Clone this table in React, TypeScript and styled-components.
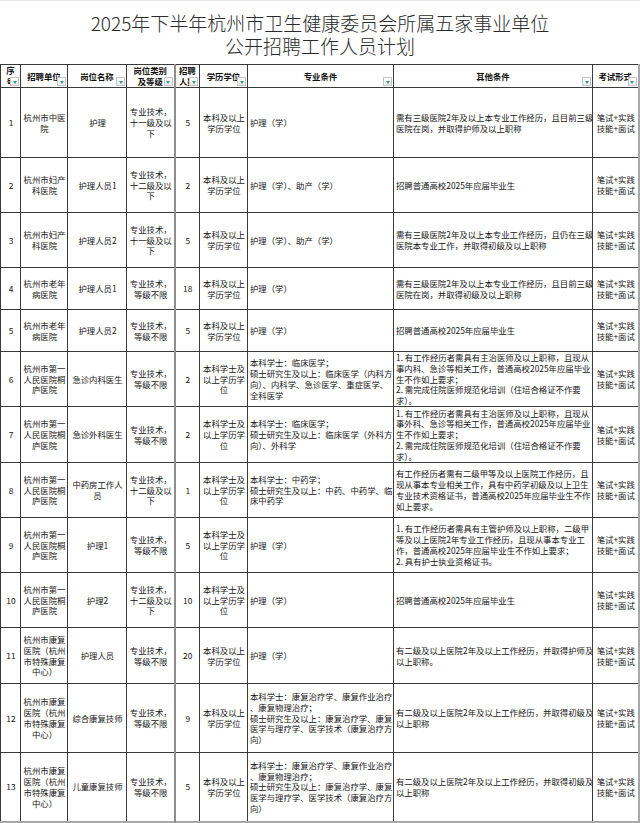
import React from "react";
import styled, { createGlobalStyle } from "styled-components";

const GlobalStyle = createGlobalStyle`
  html, body { margin: 0; padding: 0; background: #fff; }
  body { font-family: "Noto Sans CJK SC", "Noto Sans", sans-serif; color: #111; }
`;

const Page = styled.div`
  width: 640px;
  border-top: 1px solid #e6e6e6;
  box-sizing: border-box;
`;

const TitleBlock = styled.header`
  height: 63px;
  padding-top: 10px;
  box-sizing: border-box;
  text-align: center;
  font-size: 19px;
  line-height: 23px;
  font-weight: 300;
  color: #2a2a2a;
`;

const TitleLine = styled.div`
  display: block;
`;

const Table = styled.table`
  border-collapse: collapse;
  table-layout: fixed;
  width: 639px;
  border-right: 2px solid #a8a8a8;
  border-bottom: 2px solid #a8a8a8;
`;

const Col = styled.col<{ $w: number }>`
  width: ${(p) => p.$w}px;
`;

const Row = styled.tr<{ $h: number }>`
  height: ${(p) => p.$h}px;
`;

const Cell = styled.td<{ $align?: "left" | "center"; $split?: boolean }>`
  border: 1px solid #3a3a3a;
  ${(p) => (p.$split ? "border-left: 2px solid #8e8e8e;" : "")}
  padding: 0 1px 0 2px;
  font-size: 8.4px;
  line-height: 10.8px;
  text-align: ${(p) => p.$align ?? "center"};
  vertical-align: middle;
  white-space: nowrap;
  overflow: hidden;
  color: #151515;
`;

const HeadCell = styled.th<{ $split?: boolean }>`
  position: relative;
  border: 1px solid #3a3a3a;
  ${(p) => (p.$split ? "border-left: 2px solid #8e8e8e;" : "")}
  padding: 0 1px;
  font-size: 8.4px;
  line-height: 10.8px;
  font-weight: 700;
  text-align: center;
  vertical-align: middle;
  white-space: nowrap;
  overflow: hidden;
  color: #111;
`;

const Line = styled.span`
  display: block;
`;

const Filter = styled.span`
  position: absolute;
  right: 1px;
  bottom: 1px;
  width: 9px;
  height: 9px;
  box-sizing: border-box;
  border: 1px solid #c6c6c6;
  background: linear-gradient(#ffffff, #ececec);
  &::after {
    content: "";
    position: absolute;
    left: 1.5px;
    top: 3px;
    border-left: 2.5px solid transparent;
    border-right: 2.5px solid transparent;
    border-top: 3px solid #2c9d84;
  }
`;

const Lines = ({ text }: { text: string }) => (
  <>
    {text.split("\n").map((l, i) => (
      <Line key={i}>{l}</Line>
    ))}
  </>
);

const widths = [20, 47, 59, 48, 25, 48, 146, 199, 46];

const headers = [
  "序\n号",
  "招聘单位",
  "岗位名称",
  "岗位类别\n及等级",
  "招聘\n人数",
  "学历学位",
  "专业条件",
  "其他条件",
  "考试形式",
];

type RowData = { h: number; cells: string[] };

const exam = "笔试+实践\n技能+面试";
const tl = "杭州市第一\n人民医院桐\n庐医院";
const kf = "杭州市康复\n医院（杭州\n市特殊康复\n中心）";
const kfMajor =
  "本科学士：康复治疗学、康复作业治疗\n、康复物理治疗；\n硕士研究生及以上：康复治疗学、康复\n医学与理疗学、医学技术（康复治疗方\n向）";

const rows: RowData[] = [
  {
    h: 70,
    cells: [
      "1",
      "杭州市中医\n院",
      "护理",
      "专业技术，\n十一级及以\n下",
      "5",
      "本科及以上\n学历学位",
      "护理（学）",
      "需有三级医院2年及以上本专业工作经历，且目前三级\n医院在岗，并取得护师及以上职称",
      exam,
    ],
  },
  {
    h: 55,
    cells: [
      "2",
      "杭州市妇产\n科医院",
      "护理人员1",
      "专业技术，\n十二级及以\n下",
      "2",
      "本科及以上\n学历学位",
      "护理（学）、助产（学）",
      "招聘普通高校2025年应届毕业生",
      exam,
    ],
  },
  {
    h: 55,
    cells: [
      "3",
      "杭州市妇产\n科医院",
      "护理人员2",
      "专业技术，\n十一级及以\n下",
      "5",
      "本科及以上\n学历学位",
      "护理（学）、助产（学）",
      "需有三级医院2年及以上本专业工作经历，且仍在三级\n医院本专业工作，并取得初级及以上职称",
      exam,
    ],
  },
  {
    h: 42,
    cells: [
      "4",
      "杭州市老年\n病医院",
      "护理人员1",
      "专业技术，\n等级不限",
      "18",
      "本科及以上\n学历学位",
      "护理（学）",
      "需有三级医院2年及以上本专业工作经历，且目前三级\n医院在岗，并取得初级及以上职称",
      exam,
    ],
  },
  {
    h: 42,
    cells: [
      "5",
      "杭州市老年\n病医院",
      "护理人员2",
      "专业技术，\n等级不限",
      "5",
      "本科及以上\n学历学位",
      "护理（学）",
      "招聘普通高校2025年应届毕业生",
      exam,
    ],
  },
  {
    h: 55,
    cells: [
      "6",
      tl,
      "急诊内科医生",
      "专业技术，\n等级不限",
      "2",
      "本科学士及\n以上学历学\n位",
      "本科学士：临床医学；\n硕士研究生及以上：临床医学（内科方\n向）、内科学、急诊医学、重症医学、\n全科医学",
      "1. 有工作经历者需具有主治医师及以上职称，且现从\n事内科、急诊等相关工作，普通高校2025年应届毕业\n生不作如上要求；\n2. 需完成住院医师规范化培训（住培合格证不作要\n求）。",
      exam,
    ],
  },
  {
    h: 56,
    cells: [
      "7",
      tl,
      "急诊外科医生",
      "专业技术，\n等级不限",
      "2",
      "本科学士及\n以上学历学\n位",
      "本科学士：临床医学；\n硕士研究生及以上：临床医学（外科方\n向）、外科学",
      "1. 有工作经历者需具有主治医师及以上职称，且现从\n事外科、急诊等相关工作，普通高校2025年应届毕业\n生不作如上要求；\n2. 需完成住院医师规范化培训（住培合格证不作要\n求）。",
      exam,
    ],
  },
  {
    h: 55,
    cells: [
      "8",
      tl,
      "中药房工作人\n员",
      "专业技术，\n十二级及以\n下",
      "1",
      "本科学士及\n以上学历学\n位",
      "本科学士：中药学；\n硕士研究生及以上：中药、中药学、临\n床中药学",
      "有工作经历者需有二级甲等及以上医院工作经历，且\n现从事本专业相关工作，具有中药学初级及以上卫生\n专业技术资格证书，普通高校2025年应届毕业生不作\n如上要求。",
      exam,
    ],
  },
  {
    h: 55,
    cells: [
      "9",
      tl,
      "护理1",
      "专业技术，\n等级不限",
      "5",
      "本科学士及\n以上学历学\n位",
      "护理（学）",
      "1. 有工作经历者需具有主管护师及以上职称，二级甲\n等及以上医院2年专业工作经历，且现从事本专业工\n作，普通高校2025年应届毕业生不作如上要求；\n2. 具有护士执业资格证书。",
      exam,
    ],
  },
  {
    h: 55,
    cells: [
      "10",
      tl,
      "护理2",
      "专业技术，\n十二级及以\n下",
      "10",
      "本科学士及\n以上学历学\n位",
      "护理（学）",
      "招聘普通高校2025年应届毕业生",
      exam,
    ],
  },
  {
    h: 56,
    cells: [
      "11",
      kf,
      "护理人员",
      "专业技术，\n等级不限",
      "20",
      "本科及以上\n学历学位",
      "护理（学）",
      "有二级及以上医院2年及以上工作经历，并取得护师及\n以上职称。",
      exam,
    ],
  },
  {
    h: 69,
    cells: [
      "12",
      kf,
      "综合康复技师",
      "专业技术，\n等级不限",
      "9",
      "本科及以上\n学历学位",
      kfMajor,
      "有二级及以上医院2年及以上工作经历，并取得初级及\n以上职称",
      exam,
    ],
  },
  {
    h: 69,
    cells: [
      "13",
      kf,
      "儿童康复技师",
      "专业技术，\n等级不限",
      "5",
      "本科及以上\n学历学位",
      kfMajor,
      "有二级及以上医院2年及以上工作经历，并取得初级及\n以上职称",
      exam,
    ],
  },
];

const leftCols = new Set([6, 7]);
const SPLIT_COL = 4;

export default function App() {
  return (
    <Page>
      <GlobalStyle />
      <TitleBlock>
        <TitleLine>2025年下半年杭州市卫生健康委员会所属五家事业单位</TitleLine>
        <TitleLine>公开招聘工作人员计划</TitleLine>
      </TitleBlock>
      <Table>
        <colgroup>
          {widths.map((w, i) => (
            <Col key={i} $w={w} />
          ))}
        </colgroup>
        <thead>
          <Row $h={23}>
            {headers.map((h, i) => (
              <HeadCell key={i} $split={i === SPLIT_COL}>
                <Lines text={h} />
                <Filter />
              </HeadCell>
            ))}
          </Row>
        </thead>
        <tbody>
          {rows.map((r, ri) => (
            <Row key={ri} $h={r.h}>
              {r.cells.map((c, ci) => (
                <Cell
                  key={ci}
                  $align={leftCols.has(ci) ? "left" : "center"}
                  $split={ci === SPLIT_COL}
                >
                  <Lines text={c} />
                </Cell>
              ))}
            </Row>
          ))}
        </tbody>
      </Table>
    </Page>
  );
}
